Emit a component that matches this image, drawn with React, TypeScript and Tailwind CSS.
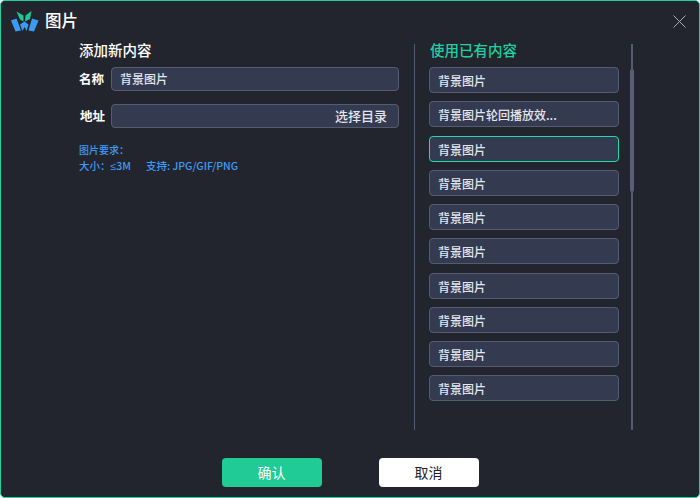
const items = [
  '背景图片',
  '背景图片轮回播放效...',
  '背景图片',
  '背景图片',
  '背景图片',
  '背景图片',
  '背景图片',
  '背景图片',
  '背景图片',
  '背景图片',
];

function Logo() {
  return (
    <svg width="28" height="21" viewBox="0 0 28 21" className="shrink-0">
      <path d="M5.5 0.5 L12.5 4.5 L12.5 10.5 L9 8.5 Z" fill="#1fc795" />
      <path d="M20.5 0 L14.5 4.5 L14 10.5 L19 8 Z" fill="#1fc795" />
      <path d="M0 9.5 L5.5 7.5 L10 19.5 L4.5 20.5 Z" fill="#3b9bf0" />
      <path d="M9 13.5 L13.5 10.5 L17.5 13.5 L15.5 20 L13.5 16 L11.5 20 Z" fill="#3b9bf0" />
      <path d="M21 7.5 L27.5 9.5 L23 20.5 L17.5 19.5 Z" fill="#3b9bf0" />
    </svg>
  );
}

function Row({ text, active = false }: { text: string; active?: boolean }) {
  return (
    <div
      className={`flex h-[26px] w-[190px] items-center rounded-[4px] border bg-[#343a50] pl-2 pt-[2px] text-[12px] font-medium text-[#e4e6ee] ${
        active ? 'border-[#1fdca8]' : 'border-[#565c70]'
      }`}
    >
      {text}
    </div>
  );
}

export default function App() {
  return (
    <div
      className="flex h-[498px] w-[700px] flex-col overflow-hidden rounded-[5px] border border-[#1fd0a0] bg-[#23252e] text-white"
      style={{ fontFamily: '"Noto Sans CJK SC", "Noto Sans", sans-serif' }}
    >
      <header className="flex h-[43px] shrink-0 items-start pl-[10px] pr-[13px] pt-[10px]">
        <Logo />
        <h1 className="ml-[6px] mt-[-1px] text-[16.5px] font-medium leading-[20px]">图片</h1>
        <svg width="13" height="13" viewBox="0 0 13 13" className="ml-auto mt-[4px]">
          <path d="M0.5 0.5 L12.5 12.5 M12.5 0.5 L0.5 12.5" stroke="#a9acb8" strokeWidth="1" fill="none" />
        </svg>
      </header>

      <main className="flex h-[386px] shrink-0">
        <section className="flex w-[414px] shrink-0 flex-col border-r border-[#565c70] pl-[78px] pr-[15px]">
          <h2 className="mt-[-2px] text-[14.5px] font-medium leading-[16px]">添加新内容</h2>
          <div className="mt-[9px] flex items-center gap-[7px]">
            <label className="w-[25px] shrink-0 whitespace-nowrap text-[12.5px] font-bold">名称</label>
            <div className="flex h-[24px] flex-1 items-center rounded-[4px] border border-[#565c70] bg-[#343a50] pl-2 text-[12px] font-medium text-[#e4e6ee]">
              背景图片
            </div>
          </div>
          <div className="mt-[13px] flex items-center gap-[7px]">
            <label className="w-[25px] shrink-0 whitespace-nowrap pl-px pt-px text-[12.5px] font-bold">地址</label>
            <div className="flex h-[24px] flex-1 items-center justify-end rounded-[4px] border border-[#565c70] bg-[#343a50] pr-[11px] text-[13px] font-medium text-[#e4e6ee]">
              选择目录
            </div>
          </div>
          <div className="mt-[14px] font-medium text-[#3f9bf5]">
            <p className="text-[10px] leading-[16px]">图片要求：</p>
            <p className="text-[10.5px] leading-[16px]">
              大小：<span className="font-['Liberation_Sans']">≤</span>3M<span className="ml-[15px]">支持: JPG/GIF/PNG</span>
            </p>
          </div>
        </section>

        <section className="relative flex w-[218px] shrink-0 flex-col border-r-2 border-[#565c70] pl-[15px]">
          <h2 className="mt-[-2px] text-[14.5px] font-medium leading-[16px] text-[#1fd0a0]">使用已有内容</h2>
          <div className="mt-[9px] ml-[-1px] flex flex-col gap-[8.25px]">
            {items.map((text, i) => (
              <Row key={i} text={text} active={i === 2} />
            ))}
          </div>
          <div className="absolute right-[-3px] top-[25px] h-[123px] w-[4px] rounded-[2px] bg-[#565e78]" />
        </section>
      </main>

      <footer className="flex justify-center gap-[57px] pt-[28px]">
        <button className="h-[29px] w-[100px] rounded-[4px] bg-[#20cb96] text-[14px] text-white">确认</button>
        <button className="h-[29px] w-[100px] rounded-[4px] bg-white text-[14px] text-[#222]">取消</button>
      </footer>
    </div>
  );
}
